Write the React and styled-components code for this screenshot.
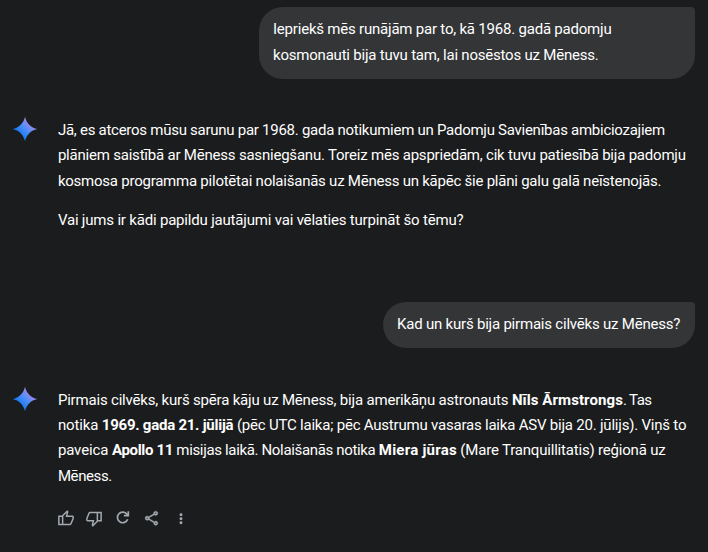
import React from 'react';
import styled, { createGlobalStyle } from 'styled-components';

const GlobalStyle = createGlobalStyle`
  * { box-sizing: border-box; }
  body { margin: 0; background: #1b1c1d; overflow: hidden; }
`;

const Chat = styled.main`
  display: flex;
  flex-direction: column;
  width: 708px;
  height: 552px;
  padding: 7px 13px 0 12px;
  background: #1b1c1d;
  color: #fff;
  font: 400 15px/25.4px Roboto, sans-serif;
`;

const Bubble = styled.div`
  align-self: flex-end;
  flex: none;
  width: ${(p) => p.$width}px;
  height: ${(p) => p.$height}px;
  padding: 10.2px 14px;
  border-radius: 24px 4px 24px 24px;
  background: #333537;
`;

const Reply = styled.article`
  display: grid;
  grid-template-columns: 26px 1fr;
  column-gap: 19.9px;
  height: ${(p) => p.$height}px;
  margin-top: ${(p) => p.$top}px;
`;

const Paragraph = styled.p`
  margin: 0;
  & + & { margin-top: 13.6px; }
`;

const Line = styled.span`
  display: block;
  white-space: pre;
`;

const Run = styled.span`
  letter-spacing: ${(p) => p.$track}px;
`;

const Strong = styled.strong`
  font-weight: 700;
  letter-spacing: ${(p) => p.$track}px;
`;

const Star = styled.svg`
  display: block;
  width: 26px;
  height: 26px;
  margin-top: ${(p) => p.$top}px;
`;

const Actions = styled.div`
  display: flex;
  align-items: center;
  gap: 10.8px;
  margin-left: 44.6px;
`;

const Action = styled.button`
  display: grid;
  place-items: center;
  width: 18px;
  height: 18px;
  padding: 0;
  border: 0;
  background: none;
  color: #a2a9b0;
`;

const Glyph = styled.svg`
  display: block;
  width: ${(p) => p.$size}px;
  height: ${(p) => p.$size}px;
  fill: currentColor;
`;

const THUMB =
  'M720-120H280v-520l280-280 50 50q7 7 11.5 19t4.5 23v14l-44 174h258q32 0 56 24t24 56v80q0 7-2 15t-4 15L794-168q-9 20-30 34t-44 14Zm-360-80h360l120-280v-80H480l54-220-174 174v406Zm-80-440v80H160v360h120v80H80v-520h200Z';

function Sparkle({ id, top }) {
  return (
    <Star viewBox="0 0 26 26" $top={top} aria-hidden="true">
      <defs>
        <linearGradient id={id} x1="6" y1="20" x2="20" y2="6" gradientUnits="userSpaceOnUse">
          <stop offset="0.15" stopColor="#1c7df2" />
          <stop offset="0.5" stopColor="#4a8df8" />
          <stop offset="0.95" stopColor="#a98be8" />
        </linearGradient>
      </defs>
      <path fill={`url(#${id})`} d="M13 .7C14.300 7 19 11.700 25.300 13C19 14.300 14.300 19 13 25.300C11.700 19 7 14.300 .7 13C7 11.700 11.700 7 13 .7Z" />
    </Star>
  );
}

export default function App() {
  return (
    <>
      <GlobalStyle />
      <Chat>
        <Bubble $width={436} $height={72}>
          <Line><Run $track={-0.21}>Iepriekš mēs runājām par to, kā 1968. gadā padomju</Run></Line>
          <Line><Run $track={-0.21}>kosmonauti bija tuvu tam, lai nosēstos uz Mēness.</Run></Line>
        </Bubble>

        <Reply $top={39} $height={184}>
          <Sparkle id="spark-one" top={-2.1} />
          <div>
            <Paragraph>
              <Line><Run $track={-0.265}>Jā, es atceros mūsu sarunu par 1968. gada notikumiem un Padomju Savienības ambiciozajiem</Run></Line>
              <Line><Run $track={-0.21}>plāniem saistībā ar Mēness sasniegšanu. Toreiz mēs apspriedām, cik tuvu patiesībā bija padomju</Run></Line>
              <Line><Run $track={-0.235}>kosmosa programma pilotētai nolaišanās uz Mēness un kāpēc šie plāni galu galā neīstenojās.</Run></Line>
            </Paragraph>
            <Paragraph>
              <Line><Run $track={-0.19}>Vai jums ir kādi papildu jautājumi vai vēlaties turpināt šo tēmu?</Run></Line>
            </Paragraph>
          </div>
        </Reply>

        <Bubble $width={312} $height={46}>
          <Line><Run $track={-0.21}>Kad un kurš bija pirmais cilvēks uz Mēness?</Run></Line>
        </Bubble>

        <Reply $top={39.6} $height={121.2}>
          <Sparkle id="spark-two" top={-2.1} />
          <Paragraph>
            <Line>
              <Run $track={-0.19}>Pirmais cilvēks, kurš spēra kāju uz Mēness, bija amerikāņu astronauts </Run>
              <Strong $track={0.08}>Nīls Ārmstrongs</Strong>
              <Run $track={-0.6}>. Tas</Run>
            </Line>
            <Line>
              <Run $track={-0.13}>notika </Run>
              <Strong $track={-0.25}>1969. gada 21. jūlijā</Strong>
              <Run $track={-0.21}> (pēc UTC laika; pēc Austrumu vasaras laika ASV bija 20. jūlijs). Viņš to</Run>
            </Line>
            <Line>
              <Run $track={-0.12}>paveica </Run>
              <Strong $track={-0.34}>Apollo 11</Strong>
              <Run $track={-0.34}> misijas laikā. Nolaišanās notika </Run>
              <Strong $track={0.23}>Miera jūras</Strong>
              <Run $track={-0.19}> (Mare Tranquillitatis) reģionā uz</Run>
            </Line>
            <Line><Run $track={-0.4}>Mēness.</Run></Line>
          </Paragraph>
        </Reply>

        <Actions>
          <Action aria-label="Patīk">
            <Glyph $size={18} viewBox="20 -980 960 960"><path d={THUMB} /></Glyph>
          </Action>
          <Action aria-label="Nepatīk">
            <Glyph $size={18} viewBox="-20 -990 960 960"><path transform="rotate(180 480 -480)" d={THUMB} /></Glyph>
          </Action>
          <Action aria-label="Atkārtot">
            <Glyph $size={18} viewBox="0 0 18 18">
              <path d="M13.700 10.300A5.300 5.300 0 1 1 12.700 4.900L14.200 6.400M14.300 2.200V6.600H9.900" fill="none" stroke="currentColor" strokeWidth="1.700" />
            </Glyph>
          </Action>
          <Action aria-label="Kopīgot">
            <Glyph $size={17} viewBox="0 -1 24 24">
              <path d="M18 16.080c-.76 0-1.440.3-1.960.77L8.910 12.700c.05-.23.09-.46.09-.7s-.04-.47-.09-.7l7.050-4.110c.54.5 1.250.81 2.040.81 1.660 0 3-1.340 3-3s-1.340-3-3-3-3 1.340-3 3c0 .24.04.47.09.7L8.040 9.810C7.500 9.310 6.790 9 6 9c-1.660 0-3 1.340-3 3s1.340 3 3 3c.79 0 1.500-.31 2.040-.81l7.120 4.160c-.05.21-.08.43-.08.65 0 1.610 1.310 2.920 2.920 2.920s2.920-1.310 2.920-2.920-1.310-2.920-2.920-2.920ZM18 4a1 1 0 1 1 0 2 1 1 0 0 1 0-2ZM6 13a1 1 0 1 1 0-2 1 1 0 0 1 0 2Zm12 7.020a1 1 0 1 1 0-2 1 1 0 0 1 0 2Z" stroke="currentColor" strokeWidth="0.500" />
            </Glyph>
          </Action>
          <Action aria-label="Vairāk">
            <Glyph $size={16} viewBox="0 -1 24 24">
              <circle cx="12" cy="6" r="2.200" /><circle cx="12" cy="12" r="2.200" /><circle cx="12" cy="18" r="2.200" />
            </Glyph>
          </Action>
        </Actions>
      </Chat>
    </>
  );
}
